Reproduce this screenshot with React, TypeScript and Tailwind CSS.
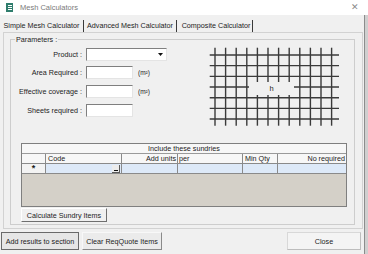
import React from "react";

const font = { fontFamily: '"Liberation Sans", Arial, sans-serif' };

function Mesh() {
  const xs = Array.from({ length: 12 }, (_, i) => 6 + 10.6 * i);
  const ys = Array.from({ length: 7 }, (_, j) => 8 + 10.67 * j);
  return (
    <svg width="131" height="80" viewBox="0 0 131 80" className="block">
      {xs.map((x, i) => (
        <line key={"v" + i} x1={x} y1={0.7} x2={x} y2={78.7} stroke="#3a3a3a" strokeWidth="1.4" />
      ))}
      {ys.map((y, j) => (
        <line key={"h" + j} x1={0.7} y1={y} x2={130} y2={y} stroke="#3a3a3a" strokeWidth="1.4" />
      ))}
      <rect x="40" y="35" width="45" height="13" fill="#f0f0f0" />
      <text x="62.5" y="43.5" textAnchor="middle" fontSize="7.5" fill="#222" style={font}>
        h
      </text>
    </svg>
  );
}

function Arrow() {
  return (
    <svg width="5" height="3" viewBox="0 0 5 3" className="block">
      <path d="M0 0 L5 0 L2.5 3 Z" fill="#111" />
    </svg>
  );
}

const sunken =
  "border border-t-[#7f7f7f] border-l-[#7f7f7f] border-r-[#e4e4e4] border-b-[#e4e4e4] bg-white";

export default function App() {
  return (
    <div
      className="w-[368px] h-[254px] bg-[#f0f0f0] overflow-hidden flex flex-col text-[7.2px] leading-[9px] text-[#1c1c1c]"
      style={font}
    >
      {/* title bar */}
      <div className="h-[15px] bg-white flex items-center shrink-0">
        <div className="ml-[6px] w-[7px] h-[9px] bg-[#2f7d6d] flex flex-col items-center justify-center gap-[1px]">
          <div className="w-[4px] h-[1px] bg-white" />
          <div className="w-[4px] h-[1px] bg-white" />
          <div className="w-[4px] h-[1px] bg-white" />
        </div>
        <div className="ml-[7px] text-[7.5px] text-[#7a7a7a]">Mesh Calculators</div>
        <div className="ml-auto mr-[9px] text-[9px] leading-[9px] text-[#8a8a8a]">✕</div>
      </div>

      <div className="flex flex-1">
        <div className="w-[364px] flex flex-col">
          {/* tabs */}
          <div className="h-[17px] flex items-end shrink-0">
            <div className="w-[84px] h-[12px] border-r border-[#3a3a3a] flex items-center justify-center pb-[1px]">
              Simple Mesh Calculator
            </div>
            <div className="w-[93px] h-[12px] border-r border-[#3a3a3a] flex items-center justify-center pb-[1px]">
              Advanced Mesh Calculator
            </div>
            <div className="w-[76px] h-[12px] border-r border-[#3a3a3a] flex items-center justify-center pb-[1px] pl-[3px]">
              Composite Calculator
            </div>
          </div>

          {/* panel */}
          <div className="ml-[3px] w-[360px] h-[197px] border border-[#d2d2d2] bg-[#f0f0f0] shrink-0">
            <fieldset className="ml-[6px] mt-[2px] w-[345px] border border-[#cdcdcd] pb-[2px]">
              <legend className="ml-[4px] px-[1px] leading-[9px]">Parameters :</legend>
              <div className="flex items-start pt-[3px]">
                <div className="w-[156px] flex flex-col mt-[1px]">
                  <div className="flex items-center h-[13px]">
                    <div className="w-[71px] text-right">Product :</div>
                    <div className={"ml-[4px] w-[81px] h-[13px] flex items-center justify-end pr-[3px] " + sunken}>
                      <Arrow />
                    </div>
                  </div>
                  <div className="flex items-center h-[13px] mt-[5px]">
                    <div className="w-[71px] text-right">Area Required :</div>
                    <div className={"ml-[4px] w-[47px] h-[13px] " + sunken} />
                    <div className="ml-[5px] text-[6.5px]">(m²)</div>
                  </div>
                  <div className="flex items-center h-[13px] mt-[6px]">
                    <div className="w-[71px] text-right whitespace-nowrap">Effective coverage :</div>
                    <div className={"ml-[4px] w-[47px] h-[13px] " + sunken} />
                    <div className="ml-[5px] text-[6.5px]">(m²)</div>
                  </div>
                  <div className="flex items-center h-[13px] mt-[6px]">
                    <div className="w-[71px] text-right">Sheets required :</div>
                    <div className={"ml-[4px] w-[47px] h-[13px] " + sunken} />
                  </div>
                </div>
                <div className="ml-[42px]">
                  <Mesh />
                </div>
              </div>

              {/* table */}
              <div className="ml-[10px] mt-[16px] w-[326px] h-[64px] border border-[#7f7f7f] flex flex-col">
                <div className="h-[10px] border-b border-[#9a9a9a] bg-[#f7f7f7] flex items-center justify-center">
                  Include these sundries
                </div>
                <div className="h-[10px] border-b border-[#8a8a8a] bg-[#f7f7f7] flex">
                  <div className="w-[24px] border-r border-[#8a8a8a]" />
                  <div className="w-[76px] border-r border-[#8a8a8a] pl-[2px]">Code</div>
                  <div className="w-[56px] border-r border-[#8a8a8a] text-right pr-[1px]">Add units</div>
                  <div className="w-[65px] border-r border-[#8a8a8a] pl-[1px]">per</div>
                  <div className="w-[35px] border-r border-[#8a8a8a] pl-[2px]">Min Qty</div>
                  <div className="w-[68px] text-right pr-[1px]">No required</div>
                </div>
                <div className="h-[10px] border-b border-[#8a8a8a] flex">
                  <div className="w-[24px] border-r border-[#8a8a8a] bg-[#f3f3f3] flex items-center justify-center text-[9px] font-bold leading-[9px]">
                    *
                  </div>
                  <div className="w-[76px] border-r border-[#8a8a8a] bg-[#dde9f8] flex items-end justify-end pr-[1px]">
                    <div className="w-[8px] h-[8px] bg-[#ececec] border-r border-b border-[#5a5a5a] flex items-end justify-center pb-[1px]">
                      <div className="w-[4px] h-[1.5px] bg-[#111]" />
                    </div>
                  </div>
                  <div className="w-[56px] border-r border-[#8a8a8a] bg-[#dde9f8]" />
                  <div className="w-[65px] border-r border-[#8a8a8a] bg-[#dde9f8]" />
                  <div className="w-[35px] border-r border-[#8a8a8a] bg-[#dde9f8]" />
                  <div className="w-[68px] bg-[#dde9f8]" />
                </div>
                <div className="flex-1 bg-[#d4d0c8]" />
              </div>

              <div className="ml-[10px] mt-[1px] w-[86px] h-[14px] bg-[#f0f0f0] border border-t-white border-l-white border-r-[#6f6f6f] border-b-[#6f6f6f] flex items-center justify-center">
                Calculate Sundry Items
              </div>
            </fieldset>
          </div>

          {/* bottom buttons */}
          <div className="flex mt-[3px] h-[18px] shrink-0">
            <div className="ml-[1px] w-[78px] h-[18px] bg-[#e6e6e6] border border-[#6a6a6a] flex items-center justify-center">
              Add results to section
            </div>
            <div className="ml-[3px] w-[80px] h-[18px] bg-[#ebebeb] border border-t-[#f8f8f8] border-l-[#f8f8f8] border-r-[#8a8a8a] border-b-[#8a8a8a] flex items-center justify-center">
              Clear ReqQuote Items
            </div>
            <div className="ml-auto mr-[3px] w-[74px] h-[18px] bg-[#f4f4f4] border border-t-[#d8d8d8] border-l-[#d8d8d8] border-r-[#bdbdbd] border-b-[#bdbdbd] flex items-center justify-center">
              Close
            </div>
          </div>
        </div>
        <div className="w-[4px] border-l border-[#8c8c8c] bg-[#cfcfcf]" />
      </div>
    </div>
  );
}
